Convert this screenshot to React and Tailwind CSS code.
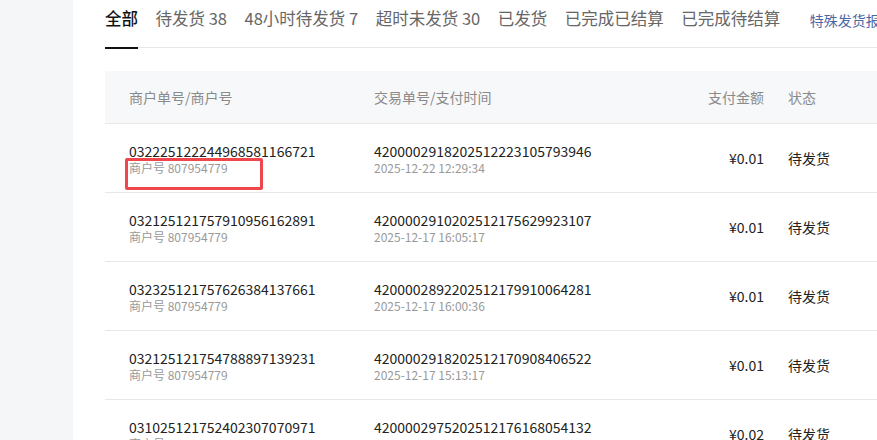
import React from 'react';

const tabs = [
    { label: '全部', active: true },
    { label: '待发货 38' },
    { label: '48小时待发货 7' },
    { label: '超时未发货 30' },
    { label: '已发货' },
    { label: '已完成已结算' },
    { label: '已完成待结算' },
];

const orders = [
    { no: '032225122244968581166721', trade: '4200002918202512223105793946', time: '2025-12-22 12:29:34', amount: '0.01' },
    { no: '032125121757910956162891', trade: '4200002910202512175629923107', time: '2025-12-17 16:05:17', amount: '0.01' },
    { no: '032325121757626384137661', trade: '4200002892202512179910064281', time: '2025-12-17 16:00:36', amount: '0.01' },
    { no: '032125121754788897139231', trade: '4200002918202512170908406522', time: '2025-12-17 15:13:17', amount: '0.01' },
    { no: '031025121752402307070971', trade: '4200002975202512176168054132', time: '2025-12-17 14:51:08', amount: '0.02' },
];

const App = () => {
    return (
        <div
            className="flex h-[440px] w-[877px] overflow-hidden bg-white"
            style={{ fontFamily: '"Noto Sans CJK SC", "Noto Sans", sans-serif' }}
        >
            {/* Sidebar */}
            <div className="w-[73px] shrink-0 bg-[#f5f6f8]" />

            {/* Main */}
            <div className="ml-[32px] flex min-w-0 flex-1 flex-col">
                {/* Tabs */}
                <div className="flex h-[48px] items-start gap-[17.5px] whitespace-nowrap border-b border-[#e8e8e8]">
                    {tabs.map((tab) => (
                        <div
                            key={tab.label}
                            className={`h-[49px] border-b-2 pt-[6px] text-[16.5px] leading-[24px] ${tab.active
                                ? 'border-[#111] font-medium text-[#111]'
                                : 'border-transparent text-[#666]'}`}
                        >
                            {tab.label}
                        </div>
                    ))}
                    <div className="ml-[12px] pt-[9px] text-[14px] leading-[22px] text-[#4a68a3]">特殊发货报备</div>
                </div>

                {/* Table */}
                <div className="mt-[23px]">
                    <div className="flex h-[53px] items-center border-b border-[#e8e8e8] bg-[#f7f8fa] text-[14px] text-[#8a8a8a]">
                        <div className="w-[245px] pl-6">商户单号/商户号</div>
                        <div className="flex-1 pl-6">交易单号/支付时间</div>
                        <div className="w-[120px] pr-6 text-right">支付金额</div>
                        <div className="w-[89px]">状态</div>
                    </div>

                    {orders.map((o, i) => (
                        <div key={o.no} className="flex h-[69px] items-center border-b border-[#e8e8e8]">
                            <div className="relative w-[245px] pl-6 pt-[1px]">
                                <div className="text-[14px] leading-[18px] text-[#222]">{o.no}</div>
                                <div className="text-[12px] leading-[16px] text-[#999]">商户号 807954779</div>
                                {i === 0 && (
                                    <div className="absolute left-[20px] top-[17px] h-[32px] w-[138px] rounded-[2px] border-[3px] border-[#f0474d]" />
                                )}
                            </div>
                            <div className="flex-1 pl-6 pt-[1px]">
                                <div className="text-[14px] leading-[18px] text-[#222]">{o.trade}</div>
                                <div className="text-[12px] leading-[16px] text-[#999]">{o.time}</div>
                            </div>
                            <div className="w-[120px] pr-6 text-right text-[14px] text-[#222]">¥{o.amount}</div>
                            <div className="w-[89px] text-[14px] text-[#222]">待发货</div>
                        </div>
                    ))}
                </div>
            </div>
        </div>
    );
};

export default App;
